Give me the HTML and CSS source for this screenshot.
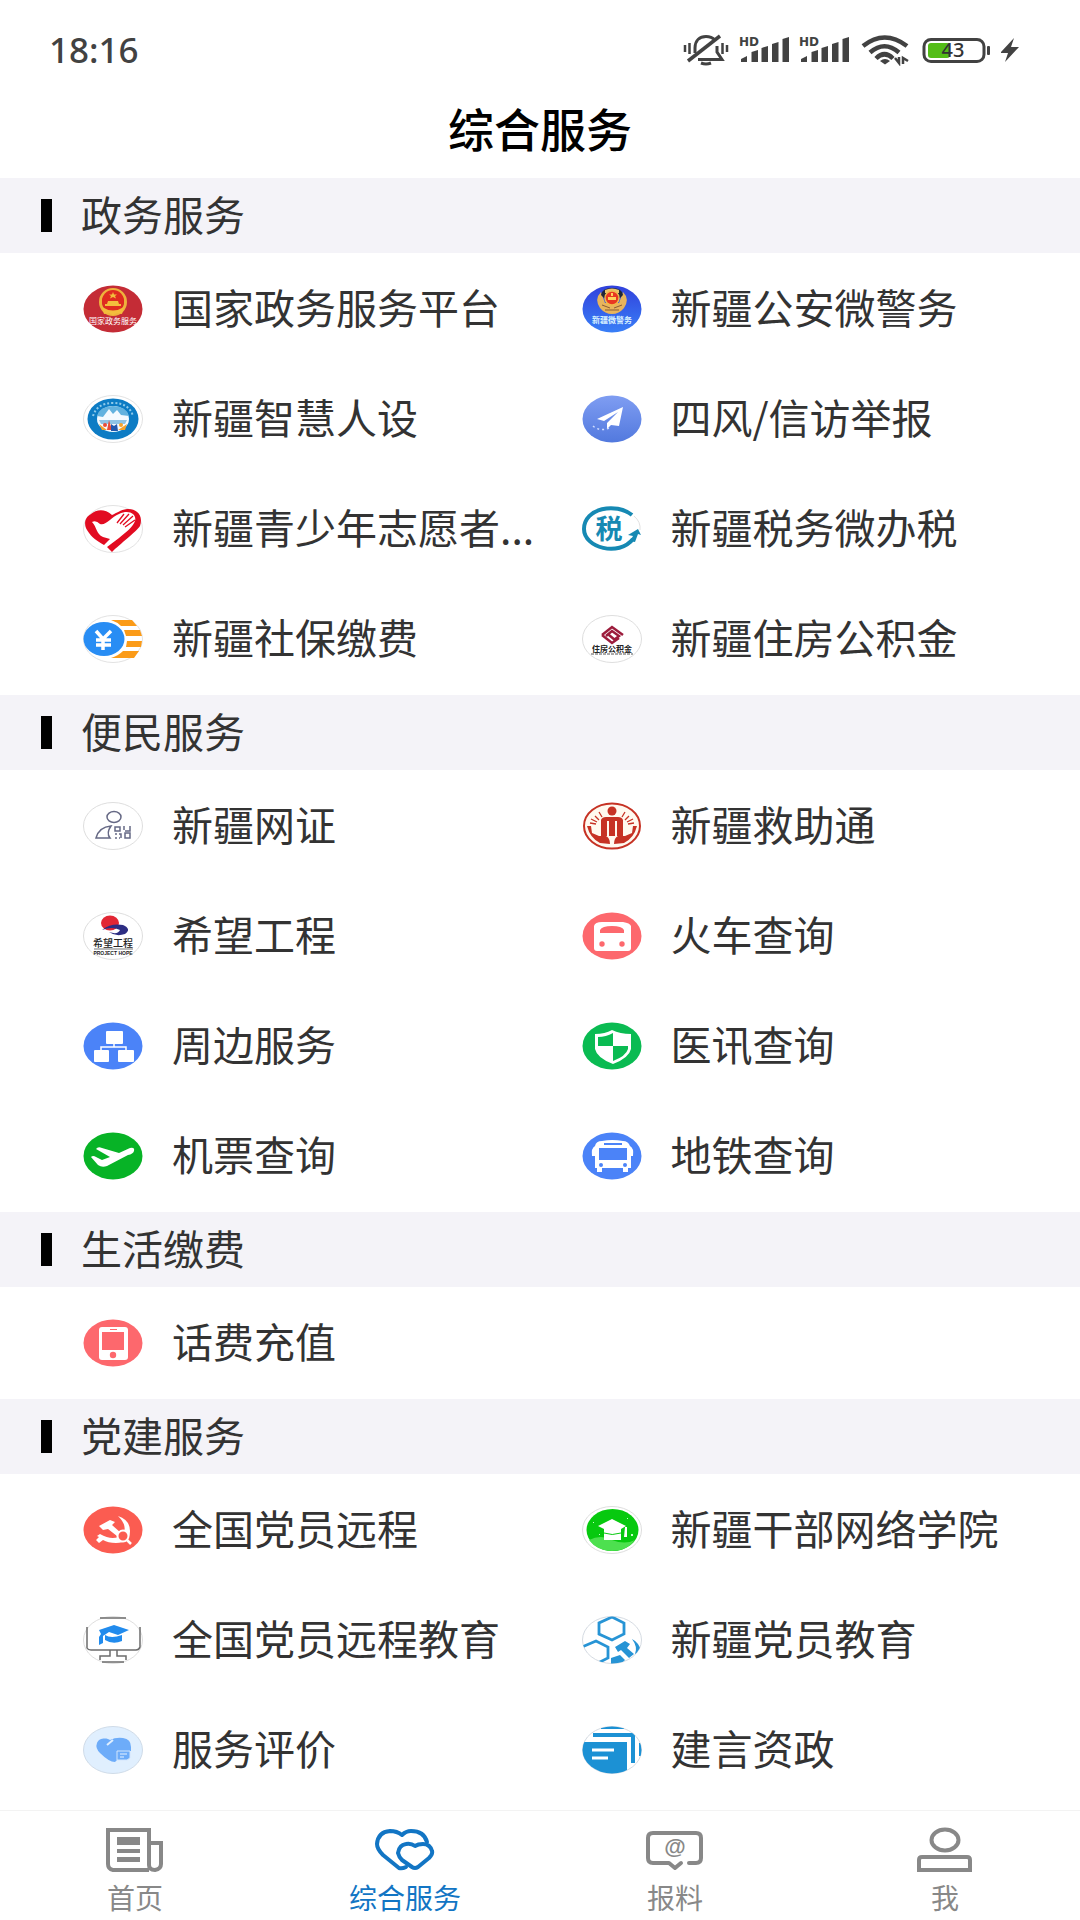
FILE: index.html
```html
<!DOCTYPE html>
<html lang="zh-CN">
<head>
<meta charset="utf-8">
<meta name="viewport" content="width=device-width, initial-scale=1">
<title>综合服务</title>
<link rel="stylesheet" href="styles.css">
</head>
<body>
<div class="status">
  <span class="time">18:16</span>
  <div class="status-icons">
    <svg width="46" height="32" viewBox="0 0 46 32" fill="none" stroke="#424242" stroke-width="3">
      <path stroke-width="2.5" d="M2 11V18M6.500 9V20M39.500 9V20M44 11V18"/>
      <path d="M12 19V14C12 6 17 2.500 23 2.500C27 2.500 30 4 32 6M34 12V18L39 25.500H15"/>
      <path stroke-width="3.500" d="M5 27L37 2"/><path d="M18 29Q23 31 28 29"/>
    </svg>
    <svg width="50" height="32" viewBox="0 0 50 32" fill="#424242">
      <text class="hd" x="0" y="12">HD</text>
      <path d="M2 28V25L8 22V28ZM12.500 28V18L19 16V28ZM22.500 28V14L29 12V28ZM33 28V10L39.500 8V28ZM43.500 28V5L50 3V28Z"/>
    </svg>
    <svg width="50" height="32" viewBox="0 0 50 32" fill="#424242">
      <text class="hd" x="0" y="12">HD</text>
      <path d="M2 28V25L8 22V28ZM12.500 28V18L19 16V28ZM22.500 28V14L29 12V28ZM33 28V10L39.500 8V28ZM43.500 28V5L50 3V28Z"/>
    </svg>
    <svg width="52" height="32" viewBox="-3 0 52 32" fill="none" stroke="#424242" stroke-width="4.500">
      <path d="M1 12Q22.500-5 45 12M8 18.500Q22.500 6 37 18.500M14 24.500Q22.500 16 31 24.500"/>
      <path d="M18 27Q23 23 28 27L23 30.500Z" fill="#424242" stroke="none"/>
      <path stroke-width="2.500" d="M33 24L37 29V23M41 30V24L46 27"/>
    </svg>
    <svg width="70" height="32" viewBox="-1 0 70 32">
      <rect x="2" y="5.500" width="60" height="22" rx="7" fill="none" stroke="#424242" stroke-width="3"/>
      <rect x="6" y="9" width="22" height="15" rx="3" fill="#54bd18"/>
      <rect x="65" y="12" width="3" height="9" rx="1" fill="#424242"/>
      <text class="charge" x="31" y="23">43</text>
    </svg>
    <svg width="20" height="32" viewBox="2 0 20 32"><path fill="#424242" d="M15 4L1 19H9L6 28L20 13H12Z"/></svg>
  </div>
</div>
<header class="titlebar"><h1>综合服务</h1></header>
<main>
  <section>
    <h2><span>政务服务</span></h2>
    <div class="grid">
      <a class="item" href="#gov"><svg viewBox="0 0 60 48">
        <ellipse cx="30" cy="24" rx="29.500" ry="23.500" fill="#c42c36"/>
        <circle cx="30" cy="17" r="12.500" fill="none" stroke="#eeb33c" stroke-width="3"/>
        <circle cx="30" cy="16" r="11" fill="#df2b20"/>
        <path fill="#f3bd3c" d="M30 7L31 9.500H34L32 11L33 13.500L30 12L27 13.500L28 11L26 9.500H29ZM24 19L25 16H35L36 19H38V21H22V19ZM19 22Q30 29 41 22L39 29L34 28L30 30L26 28L21 29Z"/>
        <text class="mini" x="30" y="39" fill="#fff">国家政务服务</text></svg><span>国家政务服务平台</span></a>
      <a class="item" href="#police"><svg viewBox="0 0 60 48">
        <defs><linearGradient id="blue" x2="0" y2="1"><stop stop-color="#3141dc"/><stop offset="1" stop-color="#397ff7"/></linearGradient></defs>
        <ellipse cx="30" cy="24" rx="29.500" ry="23.500" fill="url(#blue)"/>
        <path fill="#e8b45c" d="M19 7Q12 14 18 23Q23 29 30 29Q37 29 42 23Q48 14 41 7L37 18H23Z"/>
        <path fill="#202637" d="M19 10Q20 3 30 3Q40 3 41 10L38 13H22Z"/><path fill="#eac36c" d="M23 5Q30 2 37 5V8H23Z"/>
        <circle cx="30" cy="13" r="7" fill="#e93722" stroke="#efbb4b" stroke-width="1.500"/>
        <path stroke="#8a5a35" d="M20 20L28 23M40 20L32 23M23 25H37"/><path fill="#ffd25b" d="M26 12H34V15H26ZM29 8H31V11H29Z"/>
        <text class="mini heavy" x="30" y="38" fill="#d9f3ff">新疆微警务</text></svg><span>新疆公安微警务</span></a>
      <a class="item" href="#hr"><svg viewBox="0 0 60 48">
        <ellipse cx="30" cy="24" rx="29.500" ry="23.500" fill="#fff" stroke="#e2e2e2"/>
        <ellipse cx="30" cy="24" rx="25.500" ry="20.500" fill="#0d7cc4"/>
        <path d="M10 21Q14 8 30 8Q46 8 50 21" fill="none" stroke="#8fcaea" stroke-width="2" stroke-dasharray="2 2"/>
        <ellipse cx="30" cy="24" rx="16" ry="13" fill="#f4faff"/>
        <path fill="#63b2df" d="M14 21Q17 11 30 11Q43 11 46 21L38 20L34 15L30 19L26 14L20 22Z"/>
        <path fill="#8fc4e5" d="M16 25H44L42 29H18Z"/>
        <path fill="#e94c37" d="M24 35L26 25L29 35Z"/><path fill="#f5a22b" d="M16 29L24 35H19ZM44 29L35 35H42Z"/><path fill="#2358ad" d="M28 29L31 31L34 29L35 36H28Z"/><circle cx="22" cy="30" r="2" fill="#e94c37"/><circle cx="38" cy="30" r="2" fill="#f5a22b"/></svg><span>新疆智慧人设</span></a>
      <a class="item" href="#report"><svg viewBox="0 0 60 48">
        <defs><linearGradient id="sky" x2="0" y2="1"><stop stop-color="#7f9df2"/><stop offset="1" stop-color="#5279de"/></linearGradient></defs>
        <ellipse cx="30" cy="24" rx="29.500" ry="23.500" fill="url(#sky)"/>
        <path fill="#fff" d="M41 12L15 24L22 26L36 17L25 28V34L29 30L37 31Z"/>
        <path d="M11 31Q18 37 27 33" fill="none" stroke="#d2deff" stroke-width="1.500" stroke-dasharray="2 3"/></svg><span>四风/信访举报</span></a>
      <a class="item" href="#youth"><svg viewBox="0 0 60 48">
        <ellipse cx="30" cy="24" rx="29.500" ry="23.500" fill="#fff" stroke="#e2e2e2"/>
        <path fill="#e20b21" d="M29 10C21 3 13 5 8 9C1 13 1 20 4 25C9 33 14 36 21 40L27 34L20 32C13 29 14 22 9 17Q13 15 17 19C23 21 28 12 36 9C46 4 54 9 52 16C50 22 42 28 36 33L24 42L29 47C37 39 53 27 57 21C61 9 52 3 44 4C37 5 34 8 29 10Z"/>
        <path stroke="#fff" stroke-width="1.500" d="M21 42L29 35"/>
        <g fill="none" stroke="#e20b21" stroke-width="1.300"><path d="M34 18L41 9M37 19L46 9M40 20L50 11M42 22L52 15"/></g></svg><span>新疆青少年志愿者...</span></a>
      <a class="item" href="#tax"><svg viewBox="0 0 60 48">
        <path d="M50 10C34-3 2 3 2 24C2 43 37 52 51 34" fill="none" stroke="#1689b3" stroke-width="4"/>
        <path fill="#1689b3" d="M46 30L56 24L59 30L56 29L53 37L48 36L51 31Z"/>
        <path d="M52 11Q59 17 58 25" fill="none" stroke="#e1e1e1"/>
        <text class="tax" x="27" y="34">税</text></svg><span>新疆税务微办税</span></a>
      <a class="item" href="#social"><svg viewBox="0 0 60 48">
        <ellipse cx="30" cy="24" rx="29.500" ry="23.500" fill="#fff" stroke="#e2e2e2"/>
        <path fill="#fb9b18" d="M28 5H49L54 11H38Q34 7 28 5ZM41 15H57L59 21H43ZM44 26H59L58 32H43ZM40 36H56L51 43H28Q35 41 40 36Z"/>
        <ellipse cx="21" cy="24" rx="20.500" ry="17" fill="#288df4"/>
        <path d="M13 16L20 24L28 16M20 24V35M13 25H28M13 30H28" fill="none" stroke="#fff" stroke-width="3.500"/></svg><span>新疆社保缴费</span></a>
      <a class="item" href="#fund"><svg viewBox="0 0 60 48">
        <ellipse cx="30" cy="24" rx="29.500" ry="23.500" fill="#fff" stroke="#dedede"/>
        <g fill="none" stroke="#9c1c3c" stroke-width="2.500"><path d="M20 20L30 12L41 20M24 21L30 16L37 21L32 25M20 20L30 28L37 23M27 20L33 25"/></g>
        <text class="mini heavy" x="30" y="37" fill="#222">住房公积金</text><path stroke="#555" stroke-dasharray="3 1" d="M9 39H51"/></svg><span>新疆住房公积金</span></a>
    </div>
  </section>
  <section>
    <h2><span>便民服务</span></h2>
    <div class="grid">
      <a class="item" href="#id"><svg viewBox="0 0 60 48">
        <ellipse cx="30" cy="24" rx="29.500" ry="23.500" fill="#fff" stroke="#dedede"/>
        <g fill="none" stroke="#666985" stroke-width="1.500"><ellipse cx="31" cy="15" rx="7" ry="5.500"/><path d="M28 24Q16 25 13 36H27Q23 31 28 24ZM32 25H37V29H32ZM42 31H47V36H42Z"/></g>
        <path fill="none" stroke="#666985" stroke-width="1.500" d="M41 24V28M47 24V29H42M32 32H34M32 36H34M36 32H38V36M36 36H37"/></svg><span>新疆网证</span></a>
      <a class="item" href="#rescue"><svg viewBox="0 0 60 48">
        <ellipse cx="30" cy="24" rx="28" ry="22.500" fill="#fff9ef" stroke="#c63224" stroke-width="2"/>
        <g fill="#c63224"><circle cx="30" cy="9" r="4.500"/><path d="M19 18Q20 15 24 15H36Q40 15 41 18V34H35V19H33V34H27V19H25V34H19ZM5 24H9L10 31L17 34L24 34Q28 36 28 42L18 41Q8 36 5 24ZM55 24H51L50 31L43 34L36 34Q32 36 32 42L42 41Q52 36 55 24Z"/></g>
        <path stroke="#c63224" stroke-width="1.300" d="M8 21L14 22M9 17L15 20M13 14L17 18M17 10L20 15M52 21L46 22M51 17L45 20M47 14L43 18M43 10L40 15"/></svg><span>新疆救助通</span></a>
      <a class="item" href="#hope"><svg viewBox="0 0 60 48">
        <ellipse cx="30" cy="24" rx="29.500" ry="23.500" fill="#fff" stroke="#dedede"/>
        <ellipse cx="27" cy="11" rx="9" ry="7.500" fill="#e22634"/>
        <path fill="#2d2d83" d="M19 18Q28 11 40 13Q49 17 42 22Q33 25 26 20Q35 23 37 18Q29 14 19 18Z"/>
        <text class="script" x="30" y="35">希望工程</text><path stroke="#777" d="M11 37H50"/><text class="latin" x="30" y="43">PROJECT HOPE</text></svg><span>希望工程</span></a>
      <a class="item" href="#train"><svg viewBox="0 0 60 48">
        <ellipse cx="30" cy="24" rx="29.500" ry="23.500" fill="#fd686d"/>
        <path fill="#fff" d="M12 14Q13 10 20 10H41Q48 11 49 14V36Q49 39 46 39H15Q12 39 12 36Z"/>
        <path fill="#fd686d" d="M18 21V18Q20 14 30 14Q40 14 42 18V21Z"/><circle cx="20" cy="32" r="2.700" fill="#fd686d"/><circle cx="40" cy="32" r="2.700" fill="#fd686d"/></svg><span>火车查询</span></a>
      <a class="item" href="#near"><svg viewBox="0 0 60 48">
        <ellipse cx="30" cy="24" rx="29.500" ry="23.500" fill="#4b83f8"/>
        <g fill="#fff"><rect x="23" y="9" width="17" height="13" rx="1"/><rect x="11" y="28" width="15" height="12" rx="1"/><rect x="35" y="28" width="16" height="12" rx="1"/></g>
        <path d="M31 21V25M18 29V25H43V29" fill="none" stroke="#fff" stroke-width="1.500"/></svg><span>周边服务</span></a>
      <a class="item" href="#medical"><svg viewBox="0 0 60 48">
        <ellipse cx="30" cy="24" rx="29.500" ry="23.500" fill="#0abb52"/>
        <path fill="#fff" d="M13 12Q23 12 30 8Q38 12 49 12V27Q47 36 31 42Q15 36 13 27Z"/><path fill="#0abb52" d="M16 15Q24 15 31 11V24H46V27Q44 34 31 39V24H16Z"/></svg><span>医讯查询</span></a>
      <a class="item" href="#flight"><svg viewBox="0 0 60 48">
        <ellipse cx="30" cy="24" rx="29.500" ry="23.500" fill="#07b326"/>
        <path fill="#fff" d="M8 25Q10 23 13 25L19 28L27 25L13 17Q15 14 19 16L36 21L47 16Q52 15 51 19Q50 22 45 23L24 34Q19 36 15 33Z"/></svg><span>机票查询</span></a>
      <a class="item" href="#metro"><svg viewBox="0 0 60 48">
        <ellipse cx="30" cy="24" rx="29.500" ry="23.500" fill="#4b83f8"/>
        <path fill="#fff" d="M13 14Q14 9 20 9Q30 7 41 9Q46 9 48 14Q52 16 51 24H49V36H46V40H41V36H20V40H15V36H13V24H10Q9 16 13 14Z"/>
        <path fill="#4b83f8" d="M22 11H40V13H22ZM17 16H45V28H17Z"/><circle cx="19" cy="33" r="2" fill="#4b83f8"/><circle cx="43" cy="33" r="2" fill="#4b83f8"/></svg><span>地铁查询</span></a>
    </div>
  </section>
  <section>
    <h2><span>生活缴费</span></h2>
    <div class="grid">
      <a class="item" href="#topup"><svg viewBox="0 0 60 48">
        <ellipse cx="30" cy="24" rx="29.500" ry="23.500" fill="#fd686d"/>
        <rect x="16" y="8" width="29" height="33" rx="3" fill="#fff"/><path fill="#fd686d" d="M19 13H41V31H19ZM27 10H34V11H27Z"/><circle cx="30" cy="36" r="3.200" fill="#fd686d"/></svg><span>话费充值</span></a>
    </div>
  </section>
  <section>
    <h2><span>党建服务</span></h2>
    <div class="grid">
      <a class="item" href="#party"><svg viewBox="0 0 60 48">
        <ellipse cx="30" cy="24" rx="29.500" ry="23.500" fill="#fb5c51"/>
        <path fill="#fff" d="M16 20L27 14L32 16L29 19L38 27L34 30L25 23L20 24ZM35 10Q47 14 47 25Q47 37 33 37Q25 37 20 34L16 37L13 34L16 31L14 30L17 28Q31 36 40 28Q45 20 35 10Z"/>
        <circle cx="40" cy="30" r="5.500" fill="#fb5c51" stroke="#fff" stroke-width="2"/><path stroke="#fff" stroke-width="2.500" d="M44 34L48 38"/></svg><span>全国党员远程</span></a>
      <a class="item" href="#cadre"><svg viewBox="0 0 60 48">
        <ellipse cx="30" cy="24" rx="29.500" ry="23.500" fill="#fff" stroke="#dedede"/>
        <ellipse cx="30.500" cy="24" rx="26" ry="21" fill="#07c90f"/><path fill="#4de04f" d="M7 34Q19 28 30 34Q43 39 53 34Q45 45 30 45Q15 45 7 34Z"/>
        <path fill="#fff" d="M16 20L30 13L44 20L39 23V34H22V23ZM43 21H45V31H42Z"/><path stroke="#07c90f" fill="none" d="M22 27Q30 30 39 27"/><path fill="#c7ffcb" d="M11 16h1v1h-1ZM17 28h1v1h-1ZM49 28h2v2h-2ZM45 12h1v1h-1Z"/></svg><span>新疆干部网络学院</span></a>
      <a class="item" href="#remote"><svg viewBox="0 0 60 48">
        <ellipse cx="30" cy="24" rx="29.500" ry="23.500" fill="#fff" stroke="#dedede"/>
        <path fill="none" stroke="#6c6c6c" stroke-width="1.500" d="M4 11V32Q5 34 8 34H53Q56 34 57 31V11M17 2H43M27 34V40H17V44M34 34V40H43V44M19 46H41"/>
        <path fill="#218bed" d="M16 14L31 9L46 14L35 19L26 16L20 20V27L16 29V21L18 18ZM22 19Q28 23 39 19V25Q30 29 22 24Z"/></svg><span>全国党员远程教育</span></a>
      <a class="item" href="#edu"><svg viewBox="0 0 60 48">
        <defs><clipPath id="oval"><ellipse cx="30" cy="24" rx="29.500" ry="23.500"/></clipPath></defs>
        <ellipse cx="30" cy="24" rx="29.500" ry="23.500" fill="#fff" stroke="#d5dbe2"/>
        <g clip-path="url(#oval)"><path fill="none" stroke="#2794d5" stroke-width="2.800" d="M30 1L42 7V18L30 24L17 18V7ZM0 31L14 25L26 31V42L16 47"/><path fill="#2794d5" d="M33 31L43 25L48 28L45 32L52 38L47 42L39 34L36 36ZM50 23Q58 27 59 36L53 38Q56 31 50 23ZM29 42L38 39L43 44L39 48H29Z"/></g></svg><span>新疆党员教育</span></a>
      <a class="item" href="#rating"><svg viewBox="0 0 60 48">
        <ellipse cx="30" cy="24" rx="29.500" ry="23.500" fill="#e0effe" stroke="#cfdbe8"/>
        <path fill="#6dacf9" d="M14 17C16 11 25 12 27 14Q33 11 40 12Q48 13 48 21V25H34V34L32 36Q26 36 17 27Q12 22 14 17Z"/><path stroke="#e0effe" stroke-width="2" d="M24 19L30 14"/><path fill="#6dacf9" stroke="#d3e6fc" d="M34 25H47V32L44 34H34Z"/><path stroke="#e8f3ff" d="M37 28H44M37 31H41"/></svg><span>服务评价</span></a>
      <a class="item" href="#advice"><svg viewBox="0 0 60 48">
        <ellipse cx="30" cy="24" rx="29.500" ry="23.500" fill="#fff" stroke="#d5dbe2"/>
        <g clip-path="url(#oval)" fill="#1c91d4"><path d="M0 16H45V48H0ZM11 7H53V37H49V11H11ZM19 0H42V3H19ZM57 17H60V30H57Z"/></g><path stroke="#fff" stroke-width="3" d="M10 24H32M10 32H26"/></svg><span>建言资政</span></a>
    </div>
  </section>
</main>
<nav class="tabs">
  <a href="#home"><svg viewBox="0 0 60 50" fill="none" stroke="#888" stroke-width="4"><path d="M44 44H8Q3 43 3 38V4H44V39Q44 44 50 44Q56 43 56 38V17H45"/><path fill="#888" stroke="none" d="M12 11H35V19H12ZM12 23H35V27H12ZM12 31H35V36H12Z"/></svg><span>首页</span></a>
  <a class="active" href="#services" aria-current="page"><svg viewBox="0 0 60 50" fill="none" stroke="#1275c4" stroke-width="4" stroke-linecap="round" stroke-linejoin="round"><path d="M52 16Q49 5 36 5Q31 5 27 9Q22 5 15 5Q3 6 2 18Q2 23 8 29L24 42Q27 43 31 41"/><path d="M40 20Q36 17 31 18Q24 19 23 27Q24 31 27 34L37 41Q40 43 43 41L54 32Q58 28 57 25Q55 18 48 18Q43 18 40 20Z"/></svg><span>综合服务</span></a>
  <a href="#tips"><svg viewBox="0 0 60 50" fill="none" stroke="#888" stroke-width="4" stroke-linecap="round" stroke-linejoin="round"><path d="M44 37H51Q56 37 56 32V12Q56 7 51 7H8Q3 7 3 12V32Q3 37 8 37H24L30 42L36 37"/><text class="at" x="30" y="28">@</text></svg><span>报料</span></a>
  <a href="#me"><svg viewBox="0 0 60 50" fill="none" stroke="#888" stroke-width="4"><ellipse cx="30" cy="14" rx="13.500" ry="10.500"/><path d="M4 44V34Q4 31 7 31H52Q55 31 55 34V44Z"/></svg><span>我</span></a>
</nav>
</body>
</html>
```
FILE: styles.css
```css
* { box-sizing: border-box; }
body {
  margin: 0;
  min-height: 100vh;
  display: flex;
  flex-direction: column;
  background: #fff;
  color: #333;
  font-family: "Noto Sans CJK SC", sans-serif;
}
h1, h2 { margin: 0; font-size: inherit; }
a { color: inherit; text-decoration: none; }
svg { display: block; flex: none; }

.status {
  display: flex;
  align-items: center;
  justify-content: space-between;
  height: 82px;
  padding: 18px 59px 0 49px;
}
.time {
  color: #424242;
  font: 500 35px/40px "Noto Sans", sans-serif;
}
.status-icons { display: flex; gap: 10px; }
.hd { font: bold 12px "DejaVu Sans", sans-serif; }
.charge { font: 500 20px "Noto Sans", sans-serif; fill: #333; text-anchor: middle; }

.titlebar {
  display: flex;
  align-items: center;
  justify-content: center;
  height: 96px;
  padding-bottom: 6px;
  color: #000;
}
.titlebar h1 { font-size: 46px; font-weight: 500; line-height: 60px; }

main { flex: 1; }
h2 {
  display: flex;
  align-items: center;
  gap: 29px;
  height: 75px;
  padding-left: 41px;
  background: #f4f3f8;
  font-size: 41px;
  font-weight: 400;
  line-height: 60px;
}
h2::before { content: ""; width: 11px; height: 33px; background: #000; }
h2 span, .item span { padding-bottom: 6px; }
.grid {
  display: grid;
  grid-template-columns: 1fr 1fr;
  grid-auto-rows: 110px;
  padding: 1px 0 1px 83px;
}
.item {
  display: flex;
  align-items: center;
  gap: 29px;
  font-size: 41px;
  line-height: 60px;
  white-space: nowrap;
}
.item svg { width: 60px; height: 48px; }
.mini { font-size: 8px; text-anchor: middle; }
.heavy { font-weight: 700; }
.script { font-size: 10px; font-weight: 500; fill: #222; text-anchor: middle; }
.latin { font: bold 5px "Liberation Sans", sans-serif; text-anchor: middle; fill: #222; }
.tax { font-size: 27px; font-weight: 700; fill: #1689b3; text-anchor: middle; }

.tabs {
  display: grid;
  grid-template-columns: repeat(4, 1fr);
  border-top: 1px solid #f3f3f3;
  color: #888;
}
.tabs a {
  display: flex;
  flex-direction: column;
  align-items: center;
  gap: 5px;
  padding: 15px 0 7px;
  font-size: 28px;
  line-height: 32px;
}
.tabs svg { width: 60px; height: 50px; }
.tabs .active { color: #1275c4; }
.at { font: bold 22px "Liberation Sans", sans-serif; fill: #888; stroke: none; text-anchor: middle; }
```
